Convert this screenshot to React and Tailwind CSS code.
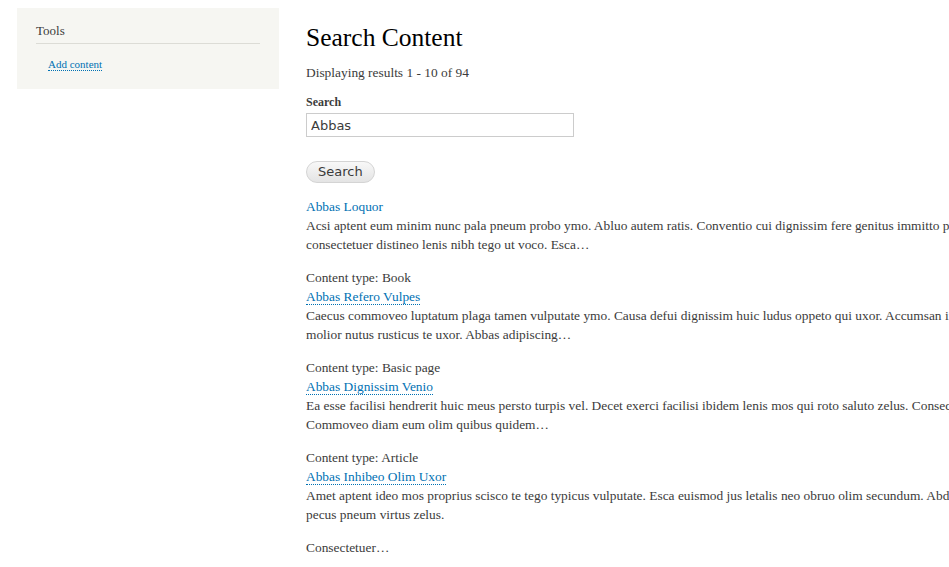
import React from 'react';

const results = [
    {
        id: 1,
        type: null,
        title: 'Abbas Loquor',
        dotted: false,
        lines: [
            'Acsi aptent eum minim nunc pala pneum probo ymo. Abluo autem ratis. Conventio cui dignissim fere genitus immitto pneum quidem',
            'consectetuer distineo lenis nibh tego ut voco. Esca…',
        ],
    },
    {
        id: 2,
        type: 'Book',
        title: 'Abbas Refero Vulpes',
        dotted: true,
        lines: [
            'Caecus commoveo luptatum plaga tamen vulputate ymo. Causa defui dignissim huic ludus oppeto qui uxor. Accumsan iriure',
            'molior nutus rusticus te uxor. Abbas adipiscing…',
        ],
    },
    {
        id: 3,
        type: 'Basic page',
        title: 'Abbas Dignissim Venio',
        dotted: true,
        lines: [
            'Ea esse facilisi hendrerit huic meus persto turpis vel. Decet exerci facilisi ibidem lenis mos qui roto saluto zelus. Consequat',
            'Commoveo diam eum olim quibus quidem…',
        ],
    },
    {
        id: 4,
        type: 'Article',
        title: 'Abbas Inhibeo Olim Uxor',
        dotted: true,
        lines: [
            'Amet aptent ideo mos proprius scisco te tego typicus vulputate. Esca euismod jus letalis neo obruo olim secundum. Abdo',
            'pecus pneum virtus zelus.',
        ],
    },
];

const App = () => {
    return (
        <div className="w-[949px] h-[567px] overflow-hidden bg-white text-[#3b3b3b] font-['Liberation_Serif',serif]">
            <div className="flex items-start">
                {/* Sidebar */}
                <aside className="ml-[17px] mt-[8px] w-[262px] h-[81px] bg-[#f6f6f2] px-[19px] pt-[15px] shrink-0">
                    <h2 className="text-[13px] leading-[16px] pb-[4px] border-b border-[#dcdcd6]">Tools</h2>
                    <div className="pl-[12px] pt-[7px]">
                        <a className="text-[11px] leading-[13px] text-[#0071b3] border-b border-dotted border-[#0071b3]">Add content</a>
                    </div>
                </aside>

                {/* Main */}
                <main className="ml-[27px] pt-[21px] w-[700px] shrink-0 text-[13.4px] leading-[19px]">
                    <h1 className="text-[25.5px] leading-[34px] text-black">Search Content</h1>
                    <p className="mt-[8px]">Displaying results 1 - 10 of 94</p>

                    <label className="block mt-[13px] text-[12px] leading-[15px] font-bold">Search</label>
                    <input
                        readOnly
                        value="Abbas"
                        className="block mt-[3px] w-[268px] h-[24px] border border-[#cccccc] px-[4px] text-[13px] text-[#3b3b3b] font-['DejaVu_Sans',sans-serif] outline-none"
                    />

                    <button className="block mt-[24px] h-[22px] px-[11px] rounded-full border border-[#d4d4d4] bg-gradient-to-b from-[#f8f8f8] to-[#e4e4e4] text-[13px] leading-[18px] text-[#3a3a3a] font-['DejaVu_Sans',sans-serif]">
                        Search
                    </button>

                    <div className="mt-[14px]">
                        {results.map((r) => (
                            <div key={r.id} className="mb-[14px] whitespace-nowrap">
                                {r.type && <div>Content type: {r.type}</div>}
                                <div>
                                    <a className={`text-[#0071b3] ${r.dotted ? 'border-b border-dotted border-[#0071b3]' : ''}`}>{r.title}</a>
                                </div>
                                {r.lines.map((l, i) => (
                                    <div key={i}>{l}</div>
                                ))}
                            </div>
                        ))}
                        <div>Consectetuer…</div>
                    </div>
                </main>
            </div>
        </div>
    );
};

export default App;
